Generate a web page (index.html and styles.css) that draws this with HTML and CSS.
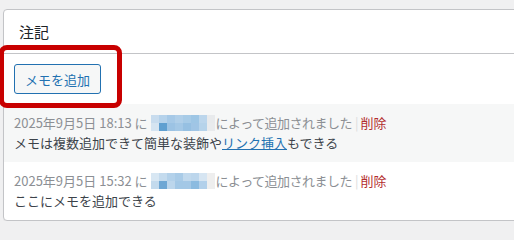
FILE: index.html
```html
<!DOCTYPE html>
<html lang="ja">
<head>
<meta charset="utf-8">
<title>注記</title>
<link rel="stylesheet" href="styles.css">
</head>
<body>
<div class="page">
  <section class="card">
    <h2 class="card-title">注記</h2>
    <div class="actions">
      <button class="btn" type="button">メモを追加</button>
    </div>
    <ul class="notes">
      <li class="note note-alt">
        <div class="meta">2025年9月5日 18:13 に<span class="mosaic"><i style="background:#c8dcee"></i><i style="background:#b5d2eb"></i><i style="background:#a6c9e7"></i><i style="background:#b0cfe9"></i><i style="background:#a7cbe7"></i><i style="background:#9ec6e5"></i><i style="background:#bcd6ec"></i><i style="background:#e8eaec"></i><i style="background:#d5e4f1"></i><i style="background:#5f9fd0"></i><i style="background:#9cc3e4"></i><i style="background:#a4c8e6"></i><i style="background:#96c0e2"></i><i style="background:#a0c5e5"></i><i style="background:#b6d3ea"></i><i style="background:#e9ebed"></i></span><span class="tight">によって追加されました</span><span class="sep">|</span><a class="del" href="#">削除</a></div>
        <div class="body">メモは複数追加できて簡単な装飾や<a class="link" href="#">リンク挿入</a>もできる</div>
      </li>
      <li class="note">
        <div class="meta">2025年9月5日 15:32 に<span class="mosaic"><i style="background:#d8e7f3"></i><i style="background:#c4dbee"></i><i style="background:#b3d1ea"></i><i style="background:#a9cbe7"></i><i style="background:#c1d9ed"></i><i style="background:#bcd6ec"></i><i style="background:#d6e5f2"></i><i style="background:#eeeeee"></i><i style="background:#c3daed"></i><i style="background:#6ea7d4"></i><i style="background:#bcd6ec"></i><i style="background:#a3c8e6"></i><i style="background:#a4c8e6"></i><i style="background:#8cbbe0"></i><i style="background:#b2d0ea"></i><i style="background:#eeeeee"></i></span><span class="tight">によって追加されました</span><span class="sep">|</span><a class="del" href="#">削除</a></div>
        <div class="body">ここにメモを追加できる</div>
      </li>
    </ul>
  </section>
  <div class="highlight"></div>
</div>
</body>
</html>
```

FILE: styles.css
```css
html, body {
  margin: 0;
  padding: 0;
  overflow: hidden;
  background: #f0f0f1;
}
body {
  font-family: "Noto Sans CJK JP", "Noto Sans", sans-serif;
  color: #3c434a;
}
.page {
  position: relative;
  padding: 9px 0 0 3px;
  width: 560px;
}
.card {
  background: #fff;
  border: 1px solid #c3c4c7;
  border-radius: 4px 0 0 4px;
  box-shadow: 0 1px 1px rgba(0,0,0,0.04);
}
.card-title {
  margin: 0;
  height: 44px;
  box-sizing: border-box;
  padding: 0 0 0 15px;
  display: flex;
  align-items: center;
  font-size: 15px;
  font-weight: 400;
  color: #1d2327;
  border-bottom: 1px solid #c3c4c7;
  line-height: 1;
}
.actions {
  padding: 10px;
  display: flex;
}
.btn {
  height: 30px;
  width: 87px;
  box-sizing: border-box;
  border: 1px solid #2271b1;
  border-radius: 3px;
  background: #f6f7f7;
  color: #2271b1;
  font-family: inherit;
  font-size: 13px;
  padding: 0;
  line-height: 1;
}
.notes {
  list-style: none;
  margin: 0;
  padding: 0;
}
.note {
  padding: 9px 10px;
  font-size: 13px;
  line-height: 20px;
}
.note-alt {
  background: #f6f7f7;
}
.meta {
  color: #8c8f94;
  display: flex;
  align-items: center;
  white-space: nowrap;
}
.tight {
  letter-spacing: -0.5px;
}
.mosaic {
  display: grid;
  grid-template-columns: repeat(8, 8px);
  grid-template-rows: repeat(2, 8px);
  margin: 0 1px 0 3px;
}
.mosaic i {
  display: block;
}
.sep {
  color: #dcdcde;
  margin: 0 2px 0 3px;
}
.del {
  color: #b32d2e;
  text-decoration: none;
}
.body {
  color: #3c434a;
  white-space: nowrap;
}
.link {
  color: #2271b1;
  text-decoration: underline;
}
.highlight {
  position: absolute;
  left: -1px;
  top: 45px;
  width: 123px;
  height: 63px;
  box-sizing: border-box;
  border: 5px solid #c80000;
  border-radius: 8px;
}
```
